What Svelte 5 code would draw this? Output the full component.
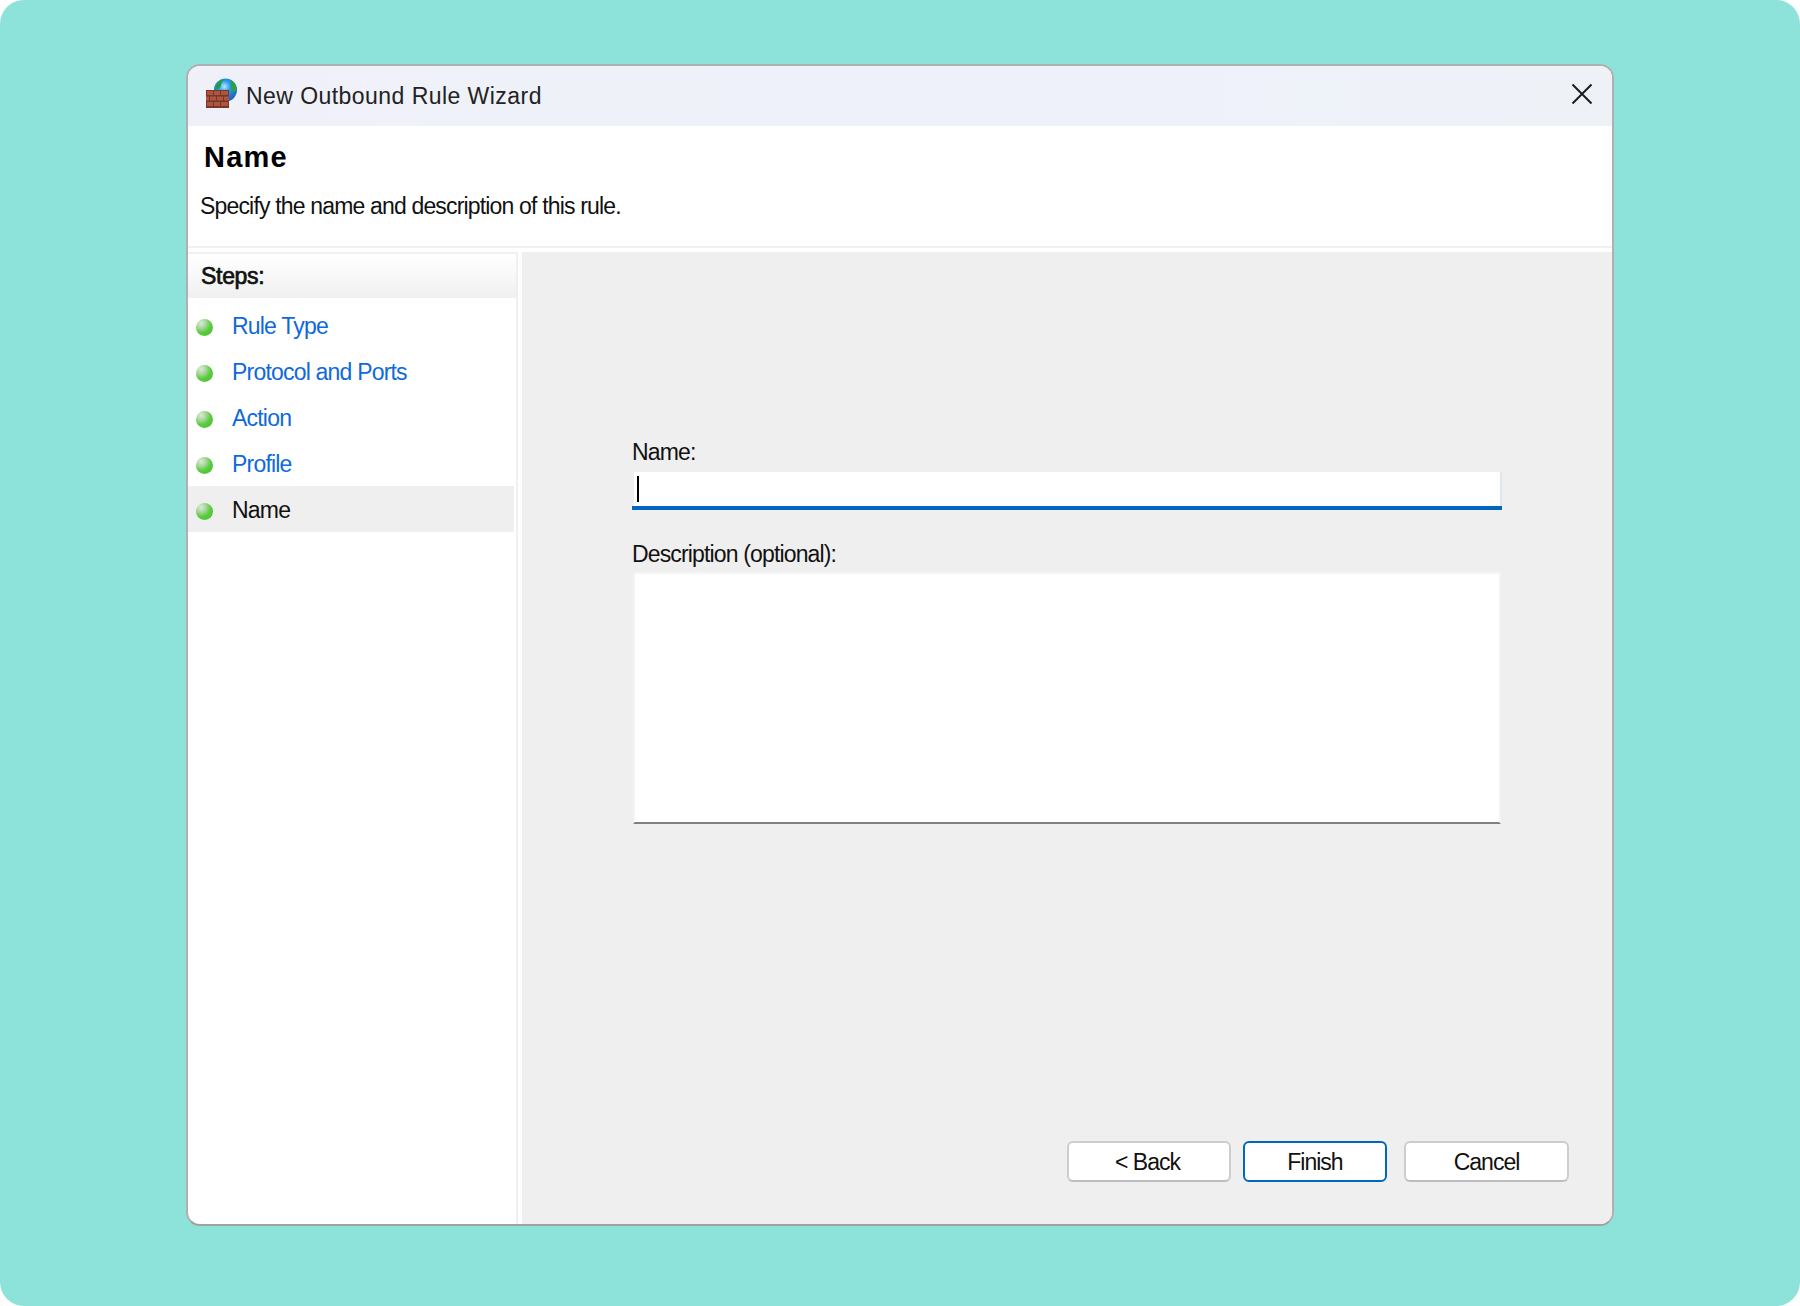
<script>
	const steps = [
		{ label: 'Rule Type', done: true },
		{ label: 'Protocol and Ports', done: true },
		{ label: 'Action', done: true },
		{ label: 'Profile', done: true },
		{ label: 'Name', done: false }
	];
</script>

<div class="page">
	<div class="window">
		<div class="titlebar">
			<svg class="app-icon" width="32" height="32" viewBox="0 0 32 32">
				<defs>
					<radialGradient id="globe" cx="0.45" cy="0.35" r="0.7">
						<stop offset="0" stop-color="#b8e8ff" />
						<stop offset="0.35" stop-color="#2f9bf0" />
						<stop offset="1" stop-color="#1559b8" />
					</radialGradient>
				</defs>
				<circle cx="20.5" cy="13" r="11.5" fill="url(#globe)" />
				<path d="M10 12c1-6 6-10 11-10-2 1-5 3-5 6 0 2-2 4-6 4z" fill="#1f9e34" />
				<path d="M26 3c3 2 5.500 6 5.500 10l-3 3c-2-3-3.500-8-2.500-13z" fill="#2aa53c" />
				<rect x="1" y="13" width="23" height="18" fill="#7c3526" />
				<g fill="#a9573f">
					<rect x="2" y="14" width="6" height="4" />
					<rect x="9" y="14" width="6" height="4" />
					<rect x="16" y="14" width="7" height="4" />
					<rect x="1" y="19.500" width="3" height="4" />
					<rect x="5" y="19.500" width="6" height="4" />
					<rect x="12" y="19.500" width="6" height="4" />
					<rect x="19" y="19.500" width="5" height="4" />
					<rect x="2" y="25" width="6" height="4" />
					<rect x="9" y="25" width="6" height="4" />
					<rect x="16" y="25" width="7" height="4" />
				</g>
			</svg>
			<span class="title">New Outbound Rule Wizard</span>
			<svg class="close" width="22" height="22" viewBox="0 0 22 22">
				<path d="M1.500 1.500l19 19M20.500 1.500l-19 19" stroke="#1c1c1c" stroke-width="2" fill="none" />
			</svg>
		</div>

		<div class="header">
			<h1>Name</h1>
			<p>Specify the name and description of this rule.</p>
		</div>

		<div class="body">
			<aside class="sidebar">
				<div class="steps-head">Steps:</div>
				<ul>
					{#each steps as step}
						<li class:current={!step.done}>
							<span class="dot"></span>
							<span class="step-label">{step.label}</span>
						</li>
					{/each}
				</ul>
			</aside>

			<main class="content">
				<div class="form">
					<div class="field-label">Name:</div>
					<div class="input">
						<div class="input-inner"><span class="caret"></span></div>
					</div>
					<div class="field-label second">Description (optional):</div>
					<div class="textarea"></div>
				</div>
				<div class="buttons">
					<button class="btn back">&lt; Back</button>
					<button class="btn finish">Finish</button>
					<button class="btn cancel">Cancel</button>
				</div>
			</main>
		</div>
	</div>
</div>

<style>
	:global(body) {
		margin: 0;
		background: #fff;
	}

	.page {
		width: 1800px;
		height: 1306px;
		box-sizing: border-box;
		padding: 64px 186px 80px;
		background: #8de3da;
		border-radius: 24px;
		font-family: 'Liberation Sans', Arial, sans-serif;
		font-size: 23px;
		color: #111;
	}

	.window {
		height: 100%;
		box-sizing: border-box;
		display: flex;
		flex-direction: column;
		background: #fff;
		border: 2px solid #b0b0b0;
		border-bottom-color: #a0a0a0;
		border-radius: 14px;
		overflow: hidden;
	}

	.titlebar {
		height: 60px;
		flex-shrink: 0;
		display: flex;
		align-items: center;
		padding: 0 19px 0 17px;
		background: linear-gradient(90deg, #f0f1f8 0%, #eef1fa 60%, #eef2f7 100%);
	}

	.app-icon {
		flex-shrink: 0;
		margin-top: -6px;
	}

	.close {
		margin-top: -5px;
	}

	.title {
		margin-left: 9px;
		flex: 1;
		color: #222;
		letter-spacing: 0.45px;
	}

	.header {
		height: 122px;
		flex-shrink: 0;
		box-sizing: border-box;
		padding-top: 14px;
		border-bottom: 2px solid #f0f0f0;
	}

	h1 {
		margin: 0 0 0 16px;
		font-size: 29px;
		line-height: 34px;
		font-weight: 700;
		color: #000;
		letter-spacing: 1.2px;
	}

	.header p {
		margin: 17px 0 0 12px;
		line-height: 30px;
		letter-spacing: -0.83px;
	}

	.body {
		flex: 1;
		min-height: 0;
		display: flex;
		margin-top: 4px;
	}

	.sidebar {
		width: 330px;
		flex-shrink: 0;
		box-sizing: border-box;
		border-right: 2px solid #f0f0f0;
		border-top: 2px solid #f0f0f0;
		margin-right: 4px;
	}

	.steps-head {
		height: 44px;
		box-sizing: border-box;
		padding: 7px 0 0 13px;
		line-height: 30px;
		letter-spacing: -0.3px;
		-webkit-text-stroke: 0.7px #111;
		background: linear-gradient(180deg, #fff 0%, #f0f0f0 100%);
	}

	ul {
		list-style: none;
		margin: 4px 2px 0 0;
		padding: 0;
	}

	li {
		height: 46px;
		display: flex;
		align-items: center;
		padding-left: 8px;
		color: #0f69dc;
	}

	li.current {
		background: #efefef;
		color: #111;
	}

	.dot {
		width: 17px;
		height: 17px;
		margin-top: 4px;
		border-radius: 50%;
		flex-shrink: 0;
		background: radial-gradient(circle at 30% 25%, #dcebd8 0%, #a8d69c 28%, #58cc3c 55%, #46bd2e 100%);
	}

	.step-label {
		margin: 2px 0 0 19px;
		letter-spacing: -0.8px;
	}

	.content {
		flex: 1;
		min-width: 0;
		display: flex;
		flex-direction: column;
		background: #efefef;
	}

	.form {
		flex: 1;
		padding: 185px 0 0 110px;
	}

	.field-label {
		line-height: 30px;
		letter-spacing: -0.85px;
	}

	.second {
		margin-top: 29px;
	}

	.input {
		margin-top: 5px;
		width: 870px;
		border-bottom: 4px solid #0067c0;
	}

	.input-inner {
		position: relative;
		box-sizing: border-box;
		height: 34px;
		margin-left: 2px;
		background: #fff;
		border-right: 2px solid #dfe6ee;
	}

	.caret {
		position: absolute;
		left: 3px;
		top: 4px;
		width: 2px;
		height: 26px;
		background: #000;
	}

	.textarea {
		margin: 3px 0 0 1px;
		width: 868px;
		height: 252px;
		box-sizing: border-box;
		background: #fff;
		border: 2px solid #f4f4f4;
		border-bottom-color: #808080;
	}

	.buttons {
		display: flex;
		justify-content: flex-end;
		padding: 0 43px 42px 0;
	}

	.btn {
		height: 41px;
		box-sizing: border-box;
		border: 2px solid #cdcdcd;
		border-bottom-color: #bdbdbd;
		border-radius: 6px;
		background: #fff;
		font-family: inherit;
		font-size: 23px;
		color: #111;
		letter-spacing: -1px;
		padding: 2px 0 0;
	}

	.back {
		width: 164px;
		padding-right: 3px;
	}

	.finish {
		width: 144px;
		margin-left: 12px;
		border-color: #0067c0;
	}

	.cancel {
		width: 165px;
		margin-left: 17px;
	}
</style>
